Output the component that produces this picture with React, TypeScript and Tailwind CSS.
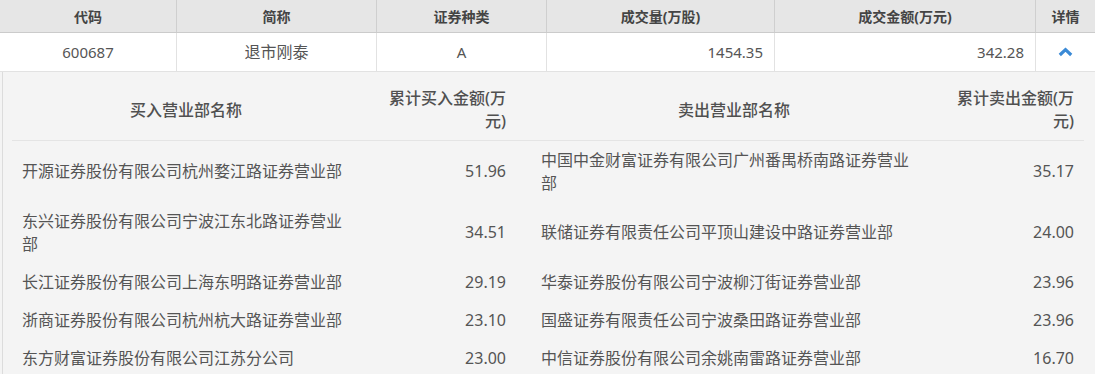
const columns = ["代码", "简称", "证券种类", "成交量(万股)", "成交金额(万元)", "详情"];

const rows: { buyName: string; buyAmt: string; sellName: string; sellAmt: string }[] = [
  {
    buyName: "开源证券股份有限公司杭州婺江路证券营业部",
    buyAmt: "51.96",
    sellName: "中国中金财富证券有限公司广州番禺桥南路证券营业部",
    sellAmt: "35.17",
  },
  {
    buyName: "东兴证券股份有限公司宁波江东北路证券营业部",
    buyAmt: "34.51",
    sellName: "联储证券有限责任公司平顶山建设中路证券营业部",
    sellAmt: "24.00",
  },
  {
    buyName: "长江证券股份有限公司上海东明路证券营业部",
    buyAmt: "29.19",
    sellName: "华泰证券股份有限公司宁波柳汀街证券营业部",
    sellAmt: "23.96",
  },
  {
    buyName: "浙商证券股份有限公司杭州杭大路证券营业部",
    buyAmt: "23.10",
    sellName: "国盛证券有限责任公司宁波桑田路证券营业部",
    sellAmt: "23.96",
  },
  {
    buyName: "东方财富证券股份有限公司江苏分公司",
    buyAmt: "23.00",
    sellName: "中信证券股份有限公司余姚南雷路证券营业部",
    sellAmt: "16.70",
  },
];

function ChevronUp() {
  return (
    <svg width="15" height="10" viewBox="0 0 15 10" fill="none">
      <polyline
        points="1.8,8 7.5,2.6 13.2,8"
        stroke="#3b8ad6"
        strokeWidth="3.2"
        strokeLinejoin="miter"
      />
    </svg>
  );
}

export default function App() {
  return (
    <div className="w-[1095px] h-[374px] overflow-hidden bg-white font-['Noto_Sans','Noto_Sans_CJK_SC',sans-serif] text-[#555]">
      {/* summary header */}
      <div className="grid h-[33px] grid-cols-[177px_200px_170px_228px_261px_1fr] border-b border-[#cbcbcb] bg-[#e6e6e6]">
        {columns.map((label, i) => (
          <div
            key={label}
            className={`flex items-center justify-center text-[14px] font-bold text-[#444] ${
              i < columns.length - 1 ? "border-r border-[#cfcfcf]" : ""
            }`}
          >
            {label}
          </div>
        ))}
      </div>

      {/* summary row */}
      <div className="grid h-[39px] grid-cols-[177px_200px_170px_228px_261px_1fr] border-b border-[#e2e2e2] text-[15px]">
        <div className="flex items-center justify-center border-r border-[#e2e2e2]">600687</div>
        <div className="flex items-center justify-center border-r border-[#e2e2e2] text-[16px]">退市刚泰</div>
        <div className="flex items-center justify-center border-r border-[#e2e2e2]">A</div>
        <div className="flex items-center justify-end border-r border-[#e2e2e2] pr-[11px]">1454.35</div>
        <div className="flex items-center justify-end border-r border-[#e2e2e2] pr-[11px]">342.28</div>
        <div className="flex items-center justify-center">
          <ChevronUp />
        </div>
      </div>

      {/* detail panel */}
      <div className="h-full bg-[#f4f4f4] pl-[2px]">
        <div className="h-full border-l border-[#dcdcdc] pl-[9px] pr-[11px] pt-[8px]">
          <div className="grid grid-cols-[372px_132px_436px_132px] border-b border-[#e4e4e4] text-[16px] leading-[23px] font-medium text-[#505050]">
            <div className="flex items-center justify-center pl-[10px] pr-[34px] py-[7px]">买入营业部名称</div>
            <div className="flex items-center justify-end pl-[2px] pr-[10px] py-[7px] text-right">累计买入金额(万元)</div>
            <div className="flex items-center justify-center px-[10px] py-[7px]">卖出营业部名称</div>
            <div className="flex items-center justify-end pl-[2px] pr-[10px] py-[7px] text-right">累计卖出金额(万元)</div>
          </div>

          {rows.map((r) => (
            <div
              key={r.buyName}
              className="grid grid-cols-[372px_132px_436px_132px] text-[16px] leading-[23px] text-[#555]"
            >
              <div className="flex items-center pl-[10px] pr-[34px] py-[7.5px]">{r.buyName}</div>
              <div className="flex items-center justify-end px-[10px] py-[7.5px]">{r.buyAmt}</div>
              <div className="flex items-center pl-[25px] pr-[35px] py-[7.5px]">{r.sellName}</div>
              <div className="flex items-center justify-end px-[10px] py-[7.5px]">{r.sellAmt}</div>
            </div>
          ))}
        </div>
      </div>
    </div>
  );
}
